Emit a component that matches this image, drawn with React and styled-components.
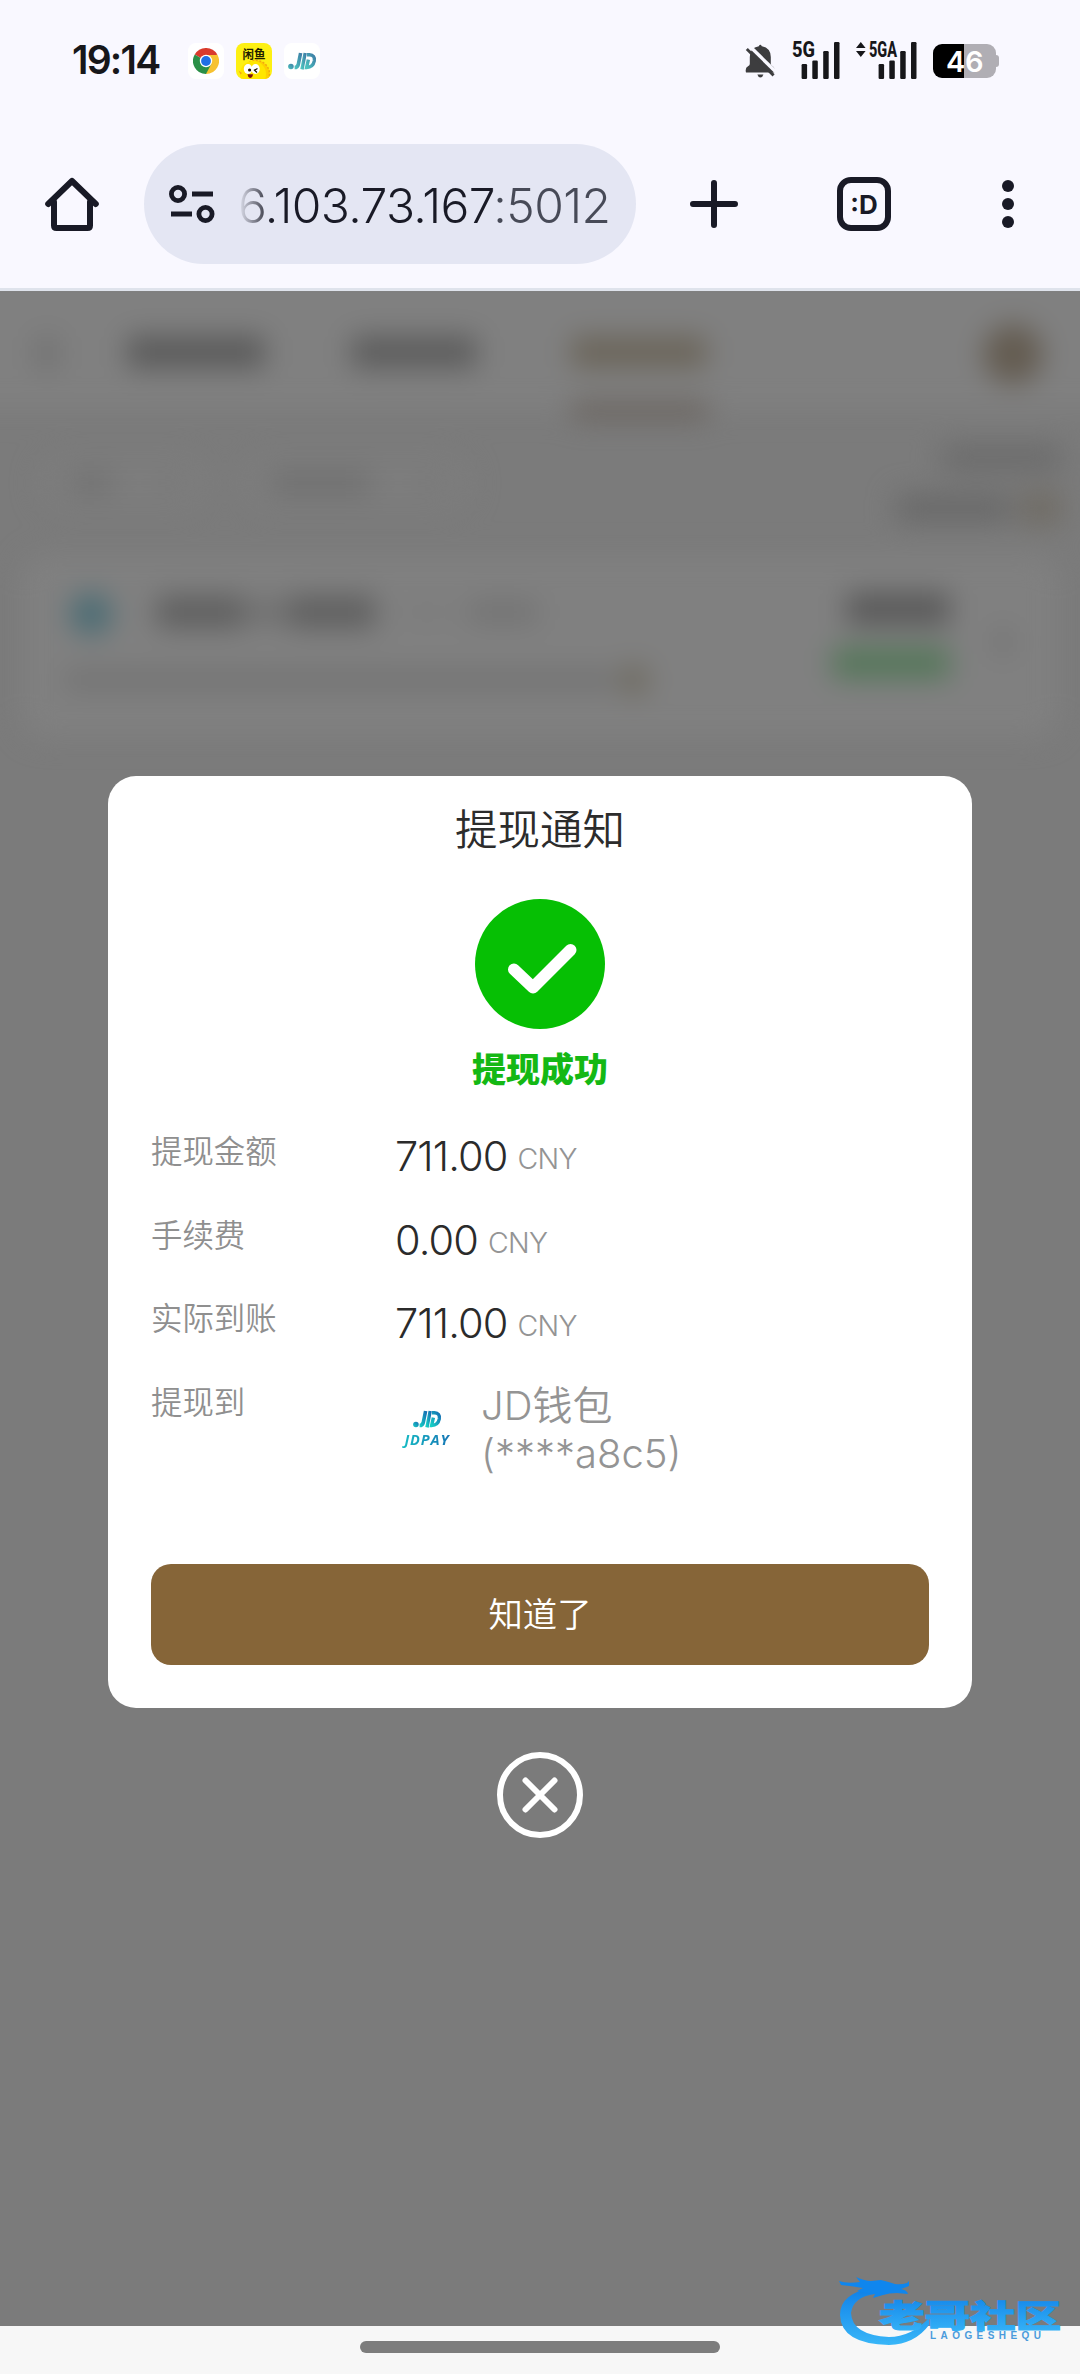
import React from "react";
import styled, { createGlobalStyle } from "styled-components";

const details = [
  { label: "提现金额", value: "711.00" },
  { label: "手续费", value: "0.00" },
  { label: "实际到账", value: "711.00" },
];

const ChromeIcon = () => (
  <svg width="26" height="26" viewBox="0 0 26 26">
    <path d="M13 13 L1.74 6.5 A13 13 0 0 1 24.26 6.5 Z" fill="#d93a2c" />
    <path d="M13 13 L24.26 6.5 A13 13 0 0 1 13 26 Z" fill="#f7c231" />
    <path d="M13 13 L13 26 A13 13 0 0 1 1.74 6.5 Z" fill="#2a8f47" />
    <path d="M13 6.9 H24.5 L18.2 16 Z" fill="#f7c231" />
    <path d="M18.3 16.1 L13 26 L10 18 Z" fill="#2a8f47" />
    <circle cx="13" cy="13" r="6.2" fill="#fff" />
    <circle cx="13" cy="13" r="4.9" fill="#1f6fe5" />
  </svg>
);

const FishIcon = () => (
  <svg width="36" height="36" viewBox="0 0 36 36">
    <circle cx="20" cy="31" r="13.5" fill="#fdd000" stroke="#f3a712" strokeWidth="1.5" strokeDasharray="2 1.5" />
    <circle cx="17" cy="31" r="13" fill="#ffe600" />
    <text x="18" y="15.5" textAnchor="middle" textLength="23" lengthAdjust="spacingAndGlyphs">闲鱼</text>
    <ellipse cx="12" cy="26" rx="4.2" ry="5" fill="#fff" />
    <ellipse cx="19.5" cy="26" rx="4.2" ry="5" fill="#fff" />
    <circle cx="13.6" cy="27" r="1.6" fill="#1d1400" />
    <path d="M21.5 25.5 L18.5 27.2 L21 29.5" fill="none" stroke="#1d1400" strokeWidth="1.3" />
    <path d="M11.5 31.2 H17 Q16.5 35 14 35 Q12 34.5 11.5 31.2Z" fill="#7a1010" />
    <path d="M2.5 27.5 L6 30 L4.5 31.5Z" fill="#f3a712" />
  </svg>
);

const JdMark = ({ size, id, from, to }) => (
  <svg width={size} height={size * 0.62} viewBox="0 0 29 18">
    <defs>
      <linearGradient id={id} x1="0" y1="1" x2="1" y2="0">
        <stop offset="0" stopColor={from} />
        <stop offset="1" stopColor={to} />
      </linearGradient>
    </defs>
    <g fill="none" stroke={`url(#${id})`}>
      <path d="M6.6 15.6 Q9.5 15.6 10.2 12.8 L12.6 1" strokeWidth="3.6" />
      <path d="M14 17.4 L17.2 1" strokeWidth="3.4" />
      <path d="M19 2.8 H21.4 Q27.3 3.2 26.3 9 Q25 15.4 18.6 15.6 L20.4 7.6" strokeWidth="3.4" />
    </g>
    <circle cx="2.9" cy="14.6" r="2.8" fill={`url(#${id})`} />
  </svg>
);

const MutedBell = () => (
  <svg width="31" height="34" viewBox="0 0 31 34">
    <path
      d="M13.8 2.2 Q15.3 -0.6 16.8 2.2 Q25.8 4 25.8 13 V20 Q25.8 21.4 28 22.4 Q30.4 24 29.8 28.6 H1 Q-0.2 23.6 3 22.2 Q4.8 21.4 4.8 20 V13 Q4.8 4 13.8 2.2Z"
      fill="#3d3d3f"
    />
    <path d="M12.4 30.6 H18.4 Q17.6 33.6 15.4 33.6 Q13.2 33.6 12.4 30.6Z" fill="#3d3d3f" />
    <path d="M4 1.5 L31 28" stroke="#f9f8ff" strokeWidth="3.4" />
    <path d="M1.8 5 L28.6 31.4" stroke="#3d3d3f" strokeWidth="2.9" />
  </svg>
);

const SignalBars = ({ offset }) => (
  <g fill="#17171a">
    <rect x={offset} y="27" width="5.5" height="15" rx="1.2" />
    <rect x={offset + 10.7} y="23.5" width="5.5" height="18.5" rx="1.2" />
    <rect x={offset + 21.6} y="14" width="5.5" height="28" rx="1.2" />
    <rect x={offset + 32.4} y="5" width="5.5" height="37" rx="1.2" />
  </g>
);

const SignalMain = () => (
  <svg width="48" height="48" viewBox="0 0 48 48">
    <SignalBars offset={9.6} />
    <text x="0" y="20" fontSize="22" textLength="23" lengthAdjust="spacingAndGlyphs">5G</text>
  </svg>
);

const SignalSecond = () => (
  <svg width="61" height="48" viewBox="0 0 61 48">
    <path d="M0 11 L4.8 5 L9.6 11Z M0 14 L4.8 20 L9.6 14Z" fill="#17171a" />
    <SignalBars offset={22.6} />
    <text x="13" y="20" fontSize="22" textLength="28" lengthAdjust="spacingAndGlyphs">5GA</text>
  </svg>
);

const HomeIcon = () => (
  <svg width="54" height="54" viewBox="0 0 54 54" fill="none" stroke="#191a26" strokeWidth="6" strokeLinejoin="round" strokeLinecap="round">
    <path d="M9 25 V48.5 Q9 51 11.5 51 H42.5 Q45 51 45 48.5 V25" />
    <path d="M3.2 27 L27 4 L50.8 27" />
  </svg>
);

const TuneIcon = () => (
  <svg width="46" height="38" viewBox="0 0 46 38" fill="none" stroke="#191a26" strokeWidth="4.8">
    <circle cx="9" cy="9" r="6.6" />
    <circle cx="36.5" cy="29" r="6.6" />
    <path d="M23 9 H44 M2 29 H23" strokeWidth="5" />
  </svg>
);

const PlusIcon = () => (
  <svg width="54" height="54" viewBox="0 0 54 54" stroke="#191a26" strokeWidth="6" strokeLinecap="round">
    <path d="M27 6 V48 M6 27 H48" />
  </svg>
);

const DotsIcon = () => (
  <svg width="54" height="54" viewBox="0 0 54 54" fill="#191a26">
    <circle cx="27" cy="9" r="6" />
    <circle cx="27" cy="27" r="6" />
    <circle cx="27" cy="45" r="6" />
  </svg>
);

const SuccessIcon = () => (
  <svg width="130" height="130" viewBox="0 0 130 130">
    <circle cx="65" cy="65" r="65" fill="#06bf04" />
    <path d="M39 70.5 L58 88.5 L95.5 51" fill="none" stroke="#fff" strokeWidth="12" strokeLinecap="round" strokeLinejoin="round" />
  </svg>
);

const CloseIcon = () => (
  <svg width="86" height="86" viewBox="0 0 86 86" fill="none" stroke="#fff" strokeWidth="6" strokeLinecap="round">
    <circle cx="43" cy="43" r="40" />
    <path d="M28.500 28.500 L57.500 57.500 M57.500 28.500 L28.500 57.500" />
  </svg>
);

const DragonBadge = () => (
  <svg width="230" height="76" viewBox="0 0 230 76">
    <defs>
      <linearGradient id="badgeBlue" x1="0" y1="0" x2="0" y2="1">
        <stop offset="0" stopColor="#0f80e8" />
        <stop offset="1" stopColor="#38b6f8" />
      </linearGradient>
    </defs>
    <path
      d="M34 11 Q1 16 1 38 Q2 67 50 68 Q76 67 90 48 V41 Q72 60 50 60 Q13 58 12 36 Q14 20 36 17Z"
      fill="url(#badgeBlue)"
    />
    <path
      d="M0 4 Q8 7 21 5 L17 0 Q26 4 32 4 L42 3 Q50 5 56 7 Q62 8 68 6 L70 4 L70 9 L62 12 Q68 13 69 17 L58 16 Q50 16 44 18 L34 21 L36 17 L26 16 L18 14 L24 11 Q12 9 2 8Z"
      fill="#0f86ee"
    />
    <text x="40" y="49.5" fontSize="31" textLength="182" lengthAdjust="spacingAndGlyphs" className="zh">老哥社区</text>
    <text x="91" y="61.5" fontSize="10" textLength="111" className="en">LAOGESHEQU</text>
  </svg>
);

const App = () => {
  return (
    <>
      <GlobalStyle />
      <Screen>
        <StatusBar>
          <Clock>19:14</Clock>
          <AppIcons>
            <AppTile><ChromeIcon /></AppTile>
            <AppTile $bg="#fdf013"><FishIcon /></AppTile>
            <AppTile><JdMark size={29} id="jdTile" from="#4cc3bf" to="#3f7fa6" /></AppTile>
          </AppIcons>
          <Indicators>
            <MutedBell />
            <SignalMain />
            <SignalSecond />
            <Battery><span>46</span></Battery>
          </Indicators>
        </StatusBar>

        <Toolbar>
          <HomeIcon />
          <AddressBar>
            <TuneIcon />
            <Address>6.103.73.167:5012</Address>
          </AddressBar>
          <PlusIcon />
          <TabCounter>:D</TabCounter>
          <DotsIcon />
        </Toolbar>

        <Page>
          <Backdrop aria-hidden="true">
            <BlurHeader>
              <Smudge $w={22} $h={34} $ml={36} $color="#707070" />
              <Smudge $w={138} $h={32} $ml={69} $color="#5a5a5a" />
              <Smudge $w={126} $h={32} $ml={86} $color="#5c5c5c" />
              <ActiveTab>
                <Smudge $w={136} $h={32} $color="#6b655a" />
                <Smudge $w={138} $h={16} $color="#67605a" />
              </ActiveTab>
              <Smudge $w={60} $h={60} $ml={274} $round $color="#645c51" />
            </BlurHeader>
            <BlurFilters>
              <Chip $w={170}>
                <Smudge $w={42} $h={22} $color="#717171" />
                <Smudge $w={16} $h={16} $color="#747474" />
              </Chip>
              <Chip $w={230}>
                <Smudge $w={100} $h={22} $color="#6f6f6f" />
                <Smudge $w={16} $h={16} $color="#747474" />
              </Chip>
              <Totals>
                <Smudge $w={120} $h={26} $color="#6b6b6b" />
                <Line>
                  <Smudge $w={116} $h={28} $color="#696969" />
                  <Smudge $w={42} $h={34} $color="#706c65" />
                </Line>
              </Totals>
            </BlurFilters>
            <BlurCard>
              <Smudge $w={42} $h={42} $round $color="#4a6c74" />
              <CardBody>
                <Line>
                  <Smudge $w={90} $h={32} $color="#5f5f5f" />
                  <Smudge $w={24} $h={24} $color="#6a6a6a" />
                  <Smudge $w={90} $h={32} $color="#5f5f5f" />
                  <Smudge $w={50} $h={12} $ml={18} $color="#7a7a7a" />
                  <Smudge $w={70} $h={22} $ml={8} $color="#727272" />
                </Line>
                <SubLine>
                  <Smudge $w={550} $h={20} $color="#727272" />
                  <Smudge $w={32} $h={32} $ml={4} $round $color="#6f6b61" />
                </SubLine>
              </CardBody>
              <CardAmount>
                <Smudge $w={104} $h={32} $color="#595959" />
                <Smudge $w={118} $h={32} $color="#55775a" />
              </CardAmount>
              <Smudge $w={14} $h={26} $color="#6e6e6e" />
            </BlurCard>
          </Backdrop>

          <Overlay>
            <Dialog>
              <Title>提现通知</Title>
              <SuccessIcon />
              <Result>提现成功</Result>
              <Details>
                {details.map((item) => (
                  <Row key={item.label}>
                    <Label>{item.label}</Label>
                    <Amount>
                      {item.value}
                      <small>CNY</small>
                    </Amount>
                  </Row>
                ))}
                <Row>
                  <Label>提现到</Label>
                  <Wallet>
                    <WalletLogo>
                      <JdMark size={29} id="jdPay" from="#16cfc4" to="#1670b4" />
                      <em>JDPAY</em>
                    </WalletLogo>
                    <WalletName>
                      <span>JD钱包</span>
                      <span>(****a8c5)</span>
                    </WalletName>
                  </Wallet>
                </Row>
              </Details>
              <Confirm type="button">知道了</Confirm>
            </Dialog>
            <CloseButton type="button" aria-label="close">
              <CloseIcon />
            </CloseButton>
          </Overlay>
        </Page>

        <NavBar>
          <NavHandle />
        </NavBar>
        <Badge>
          <DragonBadge />
        </Badge>
      </Screen>
    </>
  );
};

export default App;

const GlobalStyle = createGlobalStyle`
  * {
    box-sizing: border-box;
  }

  body {
    margin: 0;
    font-family: Inter, "Noto Sans CJK SC", sans-serif;
  }

  svg {
    display: block;
    flex-shrink: 0;
  }
`;

const Screen = styled.div`
  position: relative;
  display: flex;
  flex-direction: column;
  width: 1080px;
  height: 2374px;
  overflow: hidden;
  background: #f9f8ff;
`;

const StatusBar = styled.header`
  display: flex;
  align-items: center;
  height: 122px;
  padding: 0 81px 0 72px;
`;

const Clock = styled.div`
  width: 116px;
  padding-bottom: 3px;
  font-size: 39px;
  font-weight: 600;
  letter-spacing: -1.8px;
  color: #17171a;
`;

const AppIcons = styled.div`
  display: flex;
  gap: 12px;
`;

const AppTile = styled.div`
  display: flex;
  align-items: center;
  justify-content: center;
  width: 36px;
  height: 36px;
  border-radius: 8px;
  overflow: hidden;
  background: ${({ $bg }) => $bg || "#fff"};

  text {
    font-family: "Noto Sans CJK SC", sans-serif;
    font-size: 12px;
    font-weight: 700;
    fill: #1d1d00;
  }
`;

const Indicators = styled.div`
  display: flex;
  align-items: center;
  gap: 16px;
  margin-left: auto;

  text {
    font-family: Roboto, sans-serif;
    font-weight: 800;
    fill: #17171a;
  }
`;

const Battery = styled.div`
  position: relative;
  display: flex;
  align-items: center;
  justify-content: center;
  width: 63px;
  height: 34px;
  margin-right: 3px;
  border-radius: 9px;
  background: linear-gradient(90deg, #000 49%, #b0aeb4 49%);

  span {
    font-size: 29px;
    font-weight: 600;
    letter-spacing: -0.5px;
    color: #fff;
  }

  &::after {
    content: "";
    position: absolute;
    right: -3px;
    top: 11px;
    width: 3px;
    height: 12px;
    border-radius: 0 3px 3px 0;
    background: #b0aeb4;
  }
`;

const Toolbar = styled.nav`
  display: grid;
  grid-template-columns: 144px 492px 156px 144px 144px;
  align-items: center;
  justify-items: center;
  height: 169px;
  padding-bottom: 2px;
  border-bottom: 3px solid #dfe3ec;
`;

const AddressBar = styled.div`
  display: flex;
  align-items: center;
  gap: 23px;
  width: 492px;
  height: 120px;
  padding-left: 25px;
  border-radius: 60px;
  background: #e4e6f3;
`;

const Address = styled.div`
  padding-top: 2px;
  font-size: 48px;
  font-weight: 350;
  letter-spacing: -0.6px;
  white-space: nowrap;
  color: transparent;
  background: linear-gradient(90deg, #e4e6f3 0, #191a26 34px, #191a26 254px, #474a57 255px);
  background-clip: text;
`;

const TabCounter = styled.div`
  display: flex;
  align-items: center;
  justify-content: center;
  width: 54px;
  height: 54px;
  border: 6px solid #191a26;
  border-radius: 14px;
  font-size: 26px;
  font-weight: 700;
  color: #191a26;
`;

const Page = styled.main`
  position: relative;
  height: 2035px;
  overflow: hidden;
  background: #7b7b7b;
`;

const Backdrop = styled.div`
  filter: blur(14px);
`;

const BlurHeader = styled.div`
  display: flex;
  align-items: flex-start;
  height: 149px;
  margin: -30px -40px 0;
  padding: 75px 40px 0;
  background: #808080;
`;

const Smudge = styled.div`
  flex-shrink: 0;
  width: ${({ $w }) => $w}px;
  height: ${({ $h }) => $h}px;
  margin-left: ${({ $ml }) => $ml || 0}px;
  border-radius: ${({ $round }) => ($round ? "50%" : "6px")};
  background: ${({ $color }) => $color};
`;

const ActiveTab = styled.div`
  display: flex;
  flex-direction: column;
  gap: 34px;
  margin-left: 94px;

  & + div {
    margin-top: -12px;
  }
`;

const BlurFilters = styled.div`
  display: flex;
  align-items: center;
  gap: 30px;
  height: 145px;
  padding: 0 18px 0 40px;
`;

const Chip = styled.div`
  display: flex;
  align-items: center;
  justify-content: space-between;
  width: ${({ $w }) => $w}px;
  height: 54px;
  padding: 0 30px;
  border-radius: 27px;
  background: #7d7d7d;
`;

const Line = styled.div`
  display: flex;
  align-items: center;
  gap: 8px;
`;

const Totals = styled.div`
  display: flex;
  flex-direction: column;
  align-items: flex-end;
  gap: 20px;
  margin: 4px 0 0 auto;
`;

const BlurCard = styled.div`
  display: flex;
  align-items: flex-start;
  height: 182px;
  margin: 0 22px;
  padding: 38px 48px;
  border-radius: 24px;
  background: #808080;

  & > div:last-child {
    margin: 36px 0 0 46px;
  }
`;

const CardBody = styled.div`
  margin: 3px 0 0 44px;
`;

const SubLine = styled.div`
  display: flex;
  align-items: center;
  margin: 36px 0 0 -92px;
`;

const CardAmount = styled.div`
  display: flex;
  flex-direction: column;
  align-items: flex-end;
  gap: 22px;
  margin-left: auto;
`;

const Overlay = styled.div`
  position: absolute;
  inset: 0;
  display: flex;
  flex-direction: column;
  align-items: center;
  padding-top: 485px;
`;

const Dialog = styled.section`
  display: flex;
  flex-direction: column;
  align-items: center;
  width: 864px;
  height: 932px;
  padding: 0 43px;
  border-radius: 28px;
  background: #fff;
`;

const Title = styled.h2`
  margin: 24px 0 39px;
  font-size: 42.5px;
  line-height: 60px;
  font-weight: 350;
  color: #2c2c2c;
`;

const Result = styled.p`
  margin: 17px 0 0;
  font-size: 34px;
  line-height: 48px;
  font-weight: 800;
  color: #14b814;
`;

const Details = styled.div`
  width: 100%;
  margin-top: 30px;
`;

const Row = styled.div`
  display: flex;
  align-items: flex-start;
  height: 83.5px;
`;

const Label = styled.span`
  width: 244px;
  padding-top: 6px;
  font-size: 31.4px;
  line-height: 44px;
  font-weight: 350;
  color: #8f8f8f;
`;

const Amount = styled.span`
  padding-top: 6px;
  font-size: 41.5px;
  line-height: 52px;
  font-weight: 350;
  letter-spacing: -0.9px;
  color: #2b2b2b;

  small {
    position: relative;
    top: -2px;
    margin-left: 10px;
    font-size: 28.5px;
    letter-spacing: -0.6px;
    color: #949494;
  }
`;

const Wallet = styled.div`
  display: flex;
  align-items: center;
  padding-top: 7px;
`;

const WalletLogo = styled.div`
  display: flex;
  flex-direction: column;
  align-items: center;
  gap: 3px;
  width: 64px;

  em {
    padding: 0 4px;
    font-family: "Open Sans", sans-serif;
    font-size: 14.5px;
    line-height: 18px;
    font-weight: 700;
    letter-spacing: 0.9px;
    color: transparent;
    background: linear-gradient(90deg, #16bfc4, #1670b4);
    background-clip: text;
  }
`;

const WalletName = styled.div`
  display: flex;
  flex-direction: column;
  margin-left: 22px;
  font-size: 40px;
  line-height: 48px;
  font-weight: 350;
  color: #949494;
`;

const Confirm = styled.button`
  width: 778px;
  height: 101px;
  margin-top: auto;
  margin-bottom: 43px;
  padding: 0 0 6px;
  border: none;
  border-radius: 20px;
  font-family: inherit;
  font-size: 34.4px;
  font-weight: 350;
  color: #fff;
  background: #866538;
`;

const CloseButton = styled.button`
  margin-top: 44px;
  padding: 0;
  border: none;
  background: none;
`;

const NavBar = styled.footer`
  display: flex;
  justify-content: center;
  height: 48px;
  padding-top: 15px;
  background: #f7f7f7;
`;

const NavHandle = styled.div`
  width: 360px;
  height: 12px;
  border-radius: 6px;
  background: #7d7d7d;
`;

const Badge = styled.div`
  position: absolute;
  left: 839px;
  top: 2277px;

  .zh {
    font-family: "Noto Sans CJK SC", sans-serif;
    font-weight: 900;
    fill: url(#badgeBlue);
    stroke: url(#badgeBlue);
    stroke-width: 1;
  }

  .en {
    font-family: "Liberation Sans", sans-serif;
    font-weight: 700;
    fill: #4a9bdc;
  }
`;
